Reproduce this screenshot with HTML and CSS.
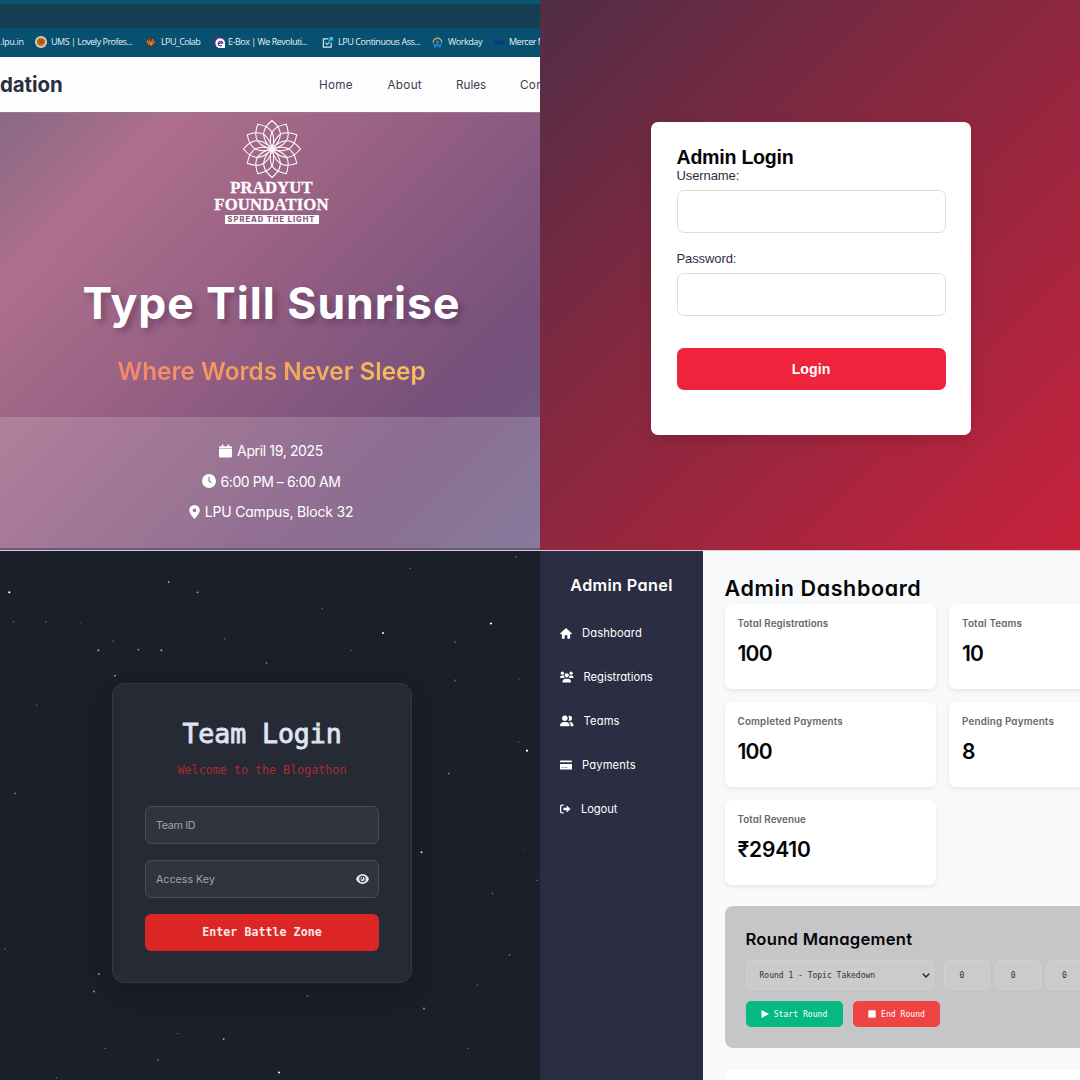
FILE: index.html
```html
<!DOCTYPE html>
<html lang="en">
<head>
<meta charset="utf-8">
<title>Type Till Sunrise</title>
<link rel="stylesheet" href="styles.css">
</head>
<body>
<main class="board">

<section class="landing">
  <div class="tabstrip"></div>
  <div class="bookmarks">
    <span class="bm bm-first">.lpu.in</span>
    <span class="bm bm-ums"><svg viewBox="0 0 12 12"><circle cx="6" cy="6" r="6" fill="#d9cfc6"/><circle cx="6" cy="6" r="4.300" fill="#d8701f"/><path d="M3 4l2 4M4.500 2.500l1.500 5M7.500 2.500L6.500 7M9.500 4L6.500 8" stroke="#6b4020" stroke-width=".7" fill="none"/></svg>UMS | Lovely Profes...</span>
    <span class="bm bm-colab"><svg viewBox="0 0 12 12"><path d="M.5 3l3 0 0-2 2.500 1.500 3-2 .5 2 2 0-.5 4-3 4.500-4 0-2.500-3z" fill="#4a3a2c"/><path d="M2 4l3 5M4.500 2.500L6 8M8.500 2.500L6.500 8M10.500 4.500L6.500 9.500" stroke="#e8862c" stroke-width="1.300" fill="none"/></svg>LPU_Colab</span>
    <span class="bm bm-ebox"><svg viewBox="0 0 12 12"><path d="M0 1L7 0l5 2v3L3 11 0 8z" fill="#5b2c91"/><path d="M7 1.500a5 5 0 0 1 5 5V12H6.500A5 5 0 0 1 7 1.500z" fill="#fff"/><path d="M4.500 6.700h5a2.500 2.500 0 1 0-.8 2.300" stroke="#5b2c91" stroke-width="1.200" fill="none"/></svg>E-Box | We Revoluti...</span>
    <span class="bm bm-ca"><svg viewBox="0 0 12 12"><path d="M7 2H1.500v9H10V6" stroke="#d5e8f0" stroke-width="1.300" fill="none"/><path d="M3.500 6l2 2.200L8 5.500" stroke="#d5e8f0" stroke-width="1.100" fill="none"/><path d="M7.500 4.500L11 1M8 .8h3.300V4" stroke="#35c3e8" stroke-width="1.800" fill="none"/></svg>LPU Continuous Ass...</span>
    <span class="bm bm-work"><svg viewBox="0 0 12 12"><path d="M1.300 6a4.700 4.700 0 0 1 9.400 0" stroke="#c9a94e" stroke-width="1.500" fill="none"/><path d="M2 6.500l1.500 4.500L6 7.500 8.500 11 10 6.500" stroke="#2b7fd0" stroke-width="1.700" fill="none"/><circle cx="6" cy="5.300" r="1.500" fill="#2b7fd0"/></svg>Workday</span>
    <span class="bm bm-mercer"><svg viewBox="0 0 12 12"><path d="M0 6l3-3 3 2 3-2 3 3-3 3-3-2-3 2z" fill="#12358a"/></svg>Mercer Mettl</span>
  </div>
  <nav class="sitenav">
    <span class="brand">dation</span>
    <div class="links"><a class="l-home">Home</a><a class="l-about">About</a><a class="l-rules">Rules</a><a class="l-contact">Contact</a></div>
  </nav>
  <div class="hero">
    <svg class="lotus" viewBox="-29 -29 58 58">
      <defs><path id="petal" d="M0 0C-5-4-9.500-11-8-17.500C-6.500-23-3-26 0-28.500C3-26 6.500-23 8-17.500C9.500-11 5-4 0 0Z"/></defs>
      <g fill="none" stroke="#fff" stroke-width="1.050">
        <use href="#petal"/><use href="#petal" transform="rotate(30)"/><use href="#petal" transform="rotate(60)"/><use href="#petal" transform="rotate(90)"/><use href="#petal" transform="rotate(120)"/><use href="#petal" transform="rotate(150)"/><use href="#petal" transform="rotate(180)"/><use href="#petal" transform="rotate(210)"/><use href="#petal" transform="rotate(240)"/><use href="#petal" transform="rotate(270)"/><use href="#petal" transform="rotate(300)"/><use href="#petal" transform="rotate(330)"/>
      </g>
      <circle r="2.500" fill="#fff"/>
    </svg>
    <div class="logo-name">PRADYUT</div>
    <div class="logo-name">FOUNDATION</div>
    <div class="logo-tag">SPREAD THE LIGHT</div>
    <h1 class="title">Type Till Sunrise</h1>
    <p class="subtitle"><span>Where Words Never Sleep</span></p>
    <div class="details">
      <p class="detail d-date"><svg viewBox="0 0 14 14"><path d="M3 0h1.800v1.800h4.400V0H11v1.800h1.500A1.400 1.400 0 0 1 14 3.200V4H0v-.8A1.400 1.400 0 0 1 1.500 1.800H3zM0 4.700h14v7.900A1.400 1.400 0 0 1 12.600 14H1.400A1.400 1.400 0 0 1 0 12.600z" fill="#fff"/></svg>April 19, 2025</p>
      <p class="detail d-time"><svg viewBox="0 0 14 14"><circle cx="7" cy="7" r="7" fill="#fff"/><path d="M7 3v4l2.400 1.700" stroke="#8d7f91" stroke-width="1.200" fill="none"/></svg>6:00 PM – 6:00 AM</p>
      <p class="detail d-place"><svg viewBox="0 0 11 14"><path d="M5.500 0A5.300 5.300 0 0 1 10.800 5.300C10.800 8 7.500 12 5.500 14 3.500 12 .2 8 .2 5.300A5.300 5.300 0 0 1 5.500 0zm0 3.600a1.800 1.800 0 1 0 0 3.600 1.800 1.800 0 0 0 0-3.600z" fill="#fff" fill-rule="evenodd"/></svg>LPU Campus, Block 32</p>
    </div>
  </div>
</section>

<section class="admin-login">
  <form class="login-card">
    <h2>Admin Login</h2>
    <label for="user">Username:</label>
    <input id="user" type="text">
    <label for="pass">Password:</label>
    <input id="pass" type="password">
    <button type="button">Login</button>
  </form>
</section>

<section class="team-login">
  <svg class="stars" viewBox="0 0 540 529">
    <g fill="#fff">
      <circle cx="9.300" cy="41.300" r="1.100"/><circle cx="491" cy="72.500" r="1.100"/><circle cx="383" cy="82" r="1"/><circle cx="527" cy="199.700" r="1.100"/><circle cx="421.500" cy="301.300" r="1"/><circle cx="279" cy="521.500" r="1"/>
    </g>
    <g fill="#fff" opacity=".6">
      <circle cx="168.700" cy="31" r=".9"/><circle cx="197.500" cy="41.300" r=".9"/><circle cx="98.300" cy="99.300" r="1"/><circle cx="138.400" cy="98.600" r=".9"/><circle cx="161.400" cy="99.300" r="1"/><circle cx="115" cy="124.700" r=".9"/><circle cx="266.500" cy="112" r=".8"/><circle cx="15" cy="242.500" r=".8"/><circle cx="448.700" cy="222.500" r=".8"/><circle cx="98.800" cy="423" r=".9"/><circle cx="94" cy="440.500" r=".9"/><circle cx="223.700" cy="488" r=".9"/><circle cx="424" cy="457.500" r=".9"/><circle cx="158" cy="509" r=".8"/>
    </g>
    <g fill="#fff" opacity=".32">
      <circle cx="515.800" cy="5.700" r=".9"/><circle cx="410" cy="17.500" r=".8"/><circle cx="13.500" cy="70.500" r=".8"/><circle cx="45.800" cy="70.700" r=".8"/><circle cx="81" cy="72" r=".6"/><circle cx="322.300" cy="57.500" r=".7"/><circle cx="113" cy="90" r=".8"/><circle cx="224.700" cy="88" r=".8"/><circle cx="455" cy="91" r=".9"/><circle cx="351" cy="99.500" r=".7"/><circle cx="455" cy="129.500" r=".9"/><circle cx="519" cy="128" r=".7"/><circle cx="36.500" cy="154" r=".8"/><circle cx="518.500" cy="191.300" r=".8"/><circle cx="492.500" cy="342.500" r=".9"/><circle cx="537" cy="329.500" r=".8"/><circle cx="509.500" cy="404" r=".9"/><circle cx="5" cy="398" r=".8"/><circle cx="477.500" cy="434" r=".8"/><circle cx="307.500" cy="445" r=".9"/><circle cx="177.600" cy="482.500" r=".8"/><circle cx="105.300" cy="497.500" r=".8"/><circle cx="468" cy="497.500" r=".8"/><circle cx="56.500" cy="527" r=".8"/><circle cx="525" cy="299" r=".6"/>
    </g>
  </svg>
  <div class="team-card">
    <h2>Team Login</h2>
    <p class="welcome">Welcome to the Blogathon</p>
    <div class="field f-id">Team ID</div>
    <div class="field f-key">Access Key<svg viewBox="0 0 13 10"><path d="M6.500 0C9.500 0 12 2.300 13 5c-1 2.700-3.500 5-6.500 5S1 7.700 0 5C1 2.300 3.500 0 6.500 0z" fill="#e6e9f5"/><circle cx="6.500" cy="5" r="2.700" fill="none" stroke="#2f333f" stroke-width="1.100"/><path d="M6.500 2.500v2.500H4.500" fill="none" stroke="#2f333f" stroke-width="1"/></svg></div>
    <button type="button">Enter Battle Zone</button>
  </div>
</section>

<section class="admin">
  <aside class="sidebar">
    <h2>Admin Panel</h2>
    <a class="item i-dash"><svg viewBox="0 0 13 12"><path d="M6.500 0L13 6l-.8.900H11V11a.8.800 0 0 1-.8.800H8V8H5v3.800H2.800A.8.800 0 0 1 2 11V6.900H.8L0 6z" fill="#fff"/></svg>Dashboard</a>
    <a class="item i-reg"><svg viewBox="0 0 14 12"><g fill="#fff"><circle cx="2.500" cy="2" r="1.700"/><circle cx="11.500" cy="2" r="1.700"/><circle cx="7" cy="4.300" r="2.100"/><path d="M0 6.600A2.200 2.200 0 0 1 2.200 4.400h1.200c.2 0 .6.100.8.200A3.300 3.300 0 0 0 5 7.100H.5zM14 6.600a2.200 2.200 0 0 0-2.200-2.200h-1.200c-.2 0-.6.100-.8.200A3.300 3.300 0 0 1 9 7.100h4.500zM2.500 11.300c0-2 1.400-3.600 3.200-3.600h2.600c1.800 0 3.200 1.600 3.200 3.600l-.5.500H3z"/></g></svg>Registrations</a>
    <a class="item i-teams"><svg viewBox="0 0 14 12"><g fill="#fff"><circle cx="5" cy="3.200" r="2.800"/><path d="M8.600.8a2.700 2.700 0 1 1 0 4.800A4 4 0 0 0 8.600.8zM0 11C0 8.600 1.700 7 3.900 7h2.200C8.300 7 10 8.600 10 11l-.6.500H.6zM11 11.500c.2-2-.4-3.500-1.700-4.500h.9c2.200 0 3.800 1.700 3.800 4l-.5.500z"/></g></svg>Teams</a>
    <a class="item i-pay"><svg viewBox="0 0 13 10"><path d="M1 0h11a1 1 0 0 1 1 1v1H0V1a1 1 0 0 1 1-1zM0 4h13v5a1 1 0 0 1-1 1H1a1 1 0 0 1-1-1z" fill="#fff"/><path d="M2 7.800h2M5 7.800h3" stroke="#2b2d42" stroke-width=".6"/></svg>Payments</a>
    <a class="item i-out"><svg viewBox="0 0 12 10"><path d="M4 .7H2A1.300 1.300 0 0 0 .7 2v6A1.300 1.300 0 0 0 2 9.300h2" stroke="#fff" stroke-width="1.400" fill="none"/><path d="M7.300 1.300L11.500 5 7.300 8.700V6.300H3.800V3.700h3.500z" fill="#fff"/></svg>Logout</a>
  </aside>
  <div class="content">
    <h1>Admin Dashboard</h1>
    <div class="stats">
      <div class="stat"><h3>Total Registrations</h3><p>100</p></div>
      <div class="stat"><h3 class="wide">Total Teams</h3><p>10</p></div>
      <div class="stat"><h3 class="wide">Completed Payments</h3><p>100</p></div>
      <div class="stat"><h3 class="wide">Pending Payments</h3><p>8</p></div>
      <div class="stat"><h3>Total Revenue</h3><p class="money">₹29410</p></div>
    </div>
    <div class="rounds">
      <h2>Round Management</h2>
      <div class="controls">
        <div class="select">Round 1 - Topic Takedown<svg viewBox="0 0 8 5"><path d="M.8.800L4 4 7.200.800" stroke="#222" stroke-width="1.400" fill="none"/></svg></div>
        <div class="num">0</div><div class="num">0</div><div class="num">0</div>
      </div>
      <div class="actions">
        <button class="start" type="button"><svg viewBox="0 0 8 8"><path d="M.5 0L8 4 .5 8z" fill="#fff"/></svg>Start Round</button>
        <button class="end" type="button"><svg viewBox="0 0 8 8"><rect x=".3" y=".3" width="7.400" height="7.400" rx=".8" fill="#fff"/></svg>End Round</button>
      </div>
    </div>
    <div class="next-card"></div>
  </div>
</section>

</main>
</body>
</html>
```
FILE: styles.css
```css
*{box-sizing:border-box;margin:0;padding:0}
body{width:1080px;height:1080px;overflow:hidden;font-family:Inter,"Open Sans",sans-serif}
button,input{font:inherit;border:0}
svg{display:block;flex:none}
.board{display:grid;grid-template-columns:540px 540px;grid-template-rows:550px 529px;row-gap:1px;background:#d5ccd6}
.board>section{overflow:hidden;min-width:0}
.links,.details,.admin{font-feature-settings:"cv11"}

/* landing page */
.tabstrip{height:28px;background:#163e53;border-top:4px solid #0b5472}
.bookmarks{display:flex;height:29px;background:#07506f;color:#e6f0f4;font:9px/28px "Open Sans","Noto Sans",sans-serif;white-space:nowrap}
.bm{display:flex;align-items:center;flex:none;height:28px;letter-spacing:-.5px}
.bm svg{width:11px;height:11px;margin-right:5px}
.bm-first{width:35px;letter-spacing:-.3px}
.bm-ums{width:110px}
.bm-ums svg{width:12px;height:12px;margin-right:4px}
.bm-colab{width:69px;letter-spacing:-.6px}
.bm-ebox{width:108px}
.bm-ebox svg{margin-right:3px}
.bm-ca{width:110px;letter-spacing:-.42px}
.bm-work{width:61px;letter-spacing:-.46px}
.bm-mercer svg{width:12px;margin-right:4px}
.sitenav{display:flex;justify-content:space-between;height:55px;background:#fdfdfd;line-height:55px}
.brand{color:#2b2d42;font-weight:700;font-size:20.500px;letter-spacing:-.1px}
.links{display:flex;flex:none;width:221px;overflow:hidden;color:#3a3c50;font-size:11.700px;line-height:56px;letter-spacing:.3px}
.links a{flex:none}
.l-home,.l-about{width:68.500px}
.l-rules{width:64px;letter-spacing:0}
.hero{display:flex;flex-direction:column;align-items:center;height:438px;padding:7px 0 0 3px;color:#fff;background:linear-gradient(135deg,#886985 0%,#ae6f8c 18%,#955f83 45%,#75507b 76%,#6d628b 104%);border-bottom:2px solid #68587a;border-top:1px solid #94788c;background-origin:border-box}
.lotus{width:58px;height:58px}
.logo-name{height:16.500px;font:700 16.700px/16.500px "Liberation Serif",serif;letter-spacing:.15px;-webkit-text-stroke:.3px #fff}
.lotus + .logo-name{margin-top:2px}
.logo-tag{width:94px;height:9px;margin-top:2px;background:#fff;color:#8a5a80;font-size:7.500px;line-height:9.500px;font-weight:800;text-align:center;letter-spacing:1px;white-space:nowrap}
.title{margin-top:49.500px;font-size:44.500px;line-height:58px;font-weight:700;letter-spacing:.95px;white-space:nowrap;text-shadow:4px 4px 6px rgba(50,25,60,.36)}
.subtitle{margin-top:23.500px;font-size:24.300px;line-height:32px;font-weight:600}
.subtitle span{background:linear-gradient(90deg,#f4866c,#f2a060 45%,#f5c15c);-webkit-background-clip:text;background-clip:text;color:transparent;white-space:nowrap}
.details{align-self:stretch;flex:1;margin-top:30px;margin-left:-3px;padding:18.500px 0 0 2px;background:rgba(255,255,255,.17);font-size:14px}
.detail{display:flex;align-items:center;justify-content:center;height:30.500px;white-space:nowrap}
.detail svg{width:13px;height:14px;margin-right:5px}
.d-date{letter-spacing:-.36px}
.d-time{letter-spacing:-.45px}
.detail.d-time svg{width:14px}
.d-place{letter-spacing:-.18px}
.detail.d-place svg{width:11px}

/* administrator sign-in */
.admin-login{display:flex;justify-content:center;padding-top:122px;padding-left:2px;background:linear-gradient(135deg,#512d46 0%,#862840 42%,#c8223c 100%);font-family:"Liberation Sans",Arial,sans-serif}
.login-card{display:flex;flex-direction:column;width:320px;height:313px;padding:25px 25.500px;background:#fff;border-radius:7px;box-shadow:0 5px 14px rgba(0,0,0,.13)}
.login-card h2{font-size:19.600px;line-height:21px;letter-spacing:-.25px;color:#050505}
.login-card label{font-size:13px;line-height:15px;letter-spacing:-.1px;color:#2b2d42}
.login-card input{flex:none;height:42.500px;margin:7px 0 18.500px;border:1.500px solid #ddd;border-radius:7px;background:#fff}
.login-card button{flex:none;height:42.500px;margin-top:13.500px;border-radius:7px;background:#ef233c;color:#fff;font-size:14.200px;font-weight:700}

/* team sign-in */
.team-login{position:relative;background:#1a1f2a}
.stars{position:absolute;inset:0;width:540px;height:529px}
.team-card{position:relative;display:flex;flex-direction:column;width:300px;height:300px;margin:132px 0 0 112px;padding:32px;background:#262a35;border:1px solid #343843;border-radius:12px;box-shadow:0 8px 28px rgba(20,18,30,.5);font-family:"DejaVu Sans Mono",monospace;text-align:center}
.team-card h2{font-size:26.600px;line-height:36px;font-weight:400;color:#dfe3f3;-webkit-text-stroke:.9px #dfe3f3;letter-spacing:-.1px;white-space:nowrap}
.welcome{margin-top:7.500px;font-size:11.700px;line-height:20px;color:#ae2930;white-space:nowrap}
.field{display:flex;align-items:center;justify-content:space-between;flex:none;height:38px;padding:0 9px 0 10px;border:1px solid #484c57;border-radius:6px;background:#30343f;color:#a0a3ad;font:10.700px Inter,sans-serif}
.field svg{width:13px;height:10px}
.f-id{margin-top:26.500px;letter-spacing:-.3px}
.f-key{margin-top:16px}
.team-card button{flex:none;height:37px;margin-top:16px;border-radius:6px;background:#dc2626;color:#fde8e8;font-size:11.600px;font-weight:700;line-height:35px;letter-spacing:.05px}

/* administrator dashboard */
.admin{display:flex;background:#f7f9fb}
.sidebar{flex:none;width:163px;padding-top:20.500px;background:#2b2d42;color:#fff}
.sidebar h2{margin-bottom:14px;font-size:16.200px;line-height:26px;font-weight:600;text-align:center;letter-spacing:.36px;white-space:nowrap}
.item{display:flex;align-items:center;height:43.850px;padding-left:20px;font-size:11.200px;letter-spacing:.14px}
.item svg{width:12px;height:11px;margin-right:10px}
.item.i-reg svg,.item.i-teams svg{width:13.500px;height:12px}
.i-reg{letter-spacing:0}
.item.i-pay svg{height:10px}
.item.i-out svg{width:11px;height:10px}
.i-out{letter-spacing:-.1px}
.content{flex:none;width:500px;padding:23.500px 0 0 21.500px;color:#050505}
.content h1{font-size:21.500px;line-height:27px;font-weight:600;letter-spacing:.62px;white-space:nowrap}
.stats{display:grid;grid-template-columns:211.500px 211.500px;grid-auto-rows:85px;gap:13px;margin-top:2px}
.stat{padding:13px;background:#fff;border-radius:7px;box-shadow:0 2px 4px rgba(0,0,0,.08)}
.stat h3{font-size:9.800px;line-height:14px;font-weight:600;letter-spacing:.1px;color:#666;white-space:nowrap}
.stat h3.wide{letter-spacing:.2px}
.stat p{margin-top:9.500px;font-size:21px;line-height:27px;font-weight:600;letter-spacing:-.8px}
.stat p.money{letter-spacing:-.2px}
.rounds{height:142px;margin-top:21.500px;padding:21.500px 21px;border-radius:8px;background:#c5c6c8}
.rounds h2{font-size:16.600px;line-height:22px;font-weight:600;letter-spacing:.26px;white-space:nowrap}
.controls{display:flex;margin-top:10.500px;font:8px "DejaVu Sans Mono",monospace;color:#333}
.select,.num{flex:none;display:flex;align-items:center;height:30px;border:1px solid #d0d1d3;border-radius:6px;background:#cacbcd}
.select{justify-content:space-between;width:188.500px;margin-right:9.500px;padding:0 3px 0 13px}
.select svg{width:8px;height:5px}
.num{width:46.500px;margin-right:4.800px;padding-left:15px}
.actions{display:flex;gap:10.500px;margin-top:10.500px}
.actions button{display:flex;align-items:center;justify-content:center;height:26.500px;border-radius:5px;color:#fff;font:8.100px "DejaVu Sans Mono",monospace}
.actions svg{width:8px;height:8px;margin-right:5px}
.start{width:97px;background:#05b981}
.end{width:87px;background:#ef4444}
.next-card{height:60px;margin-top:21.500px;border-radius:8px;background:#fff}
```
